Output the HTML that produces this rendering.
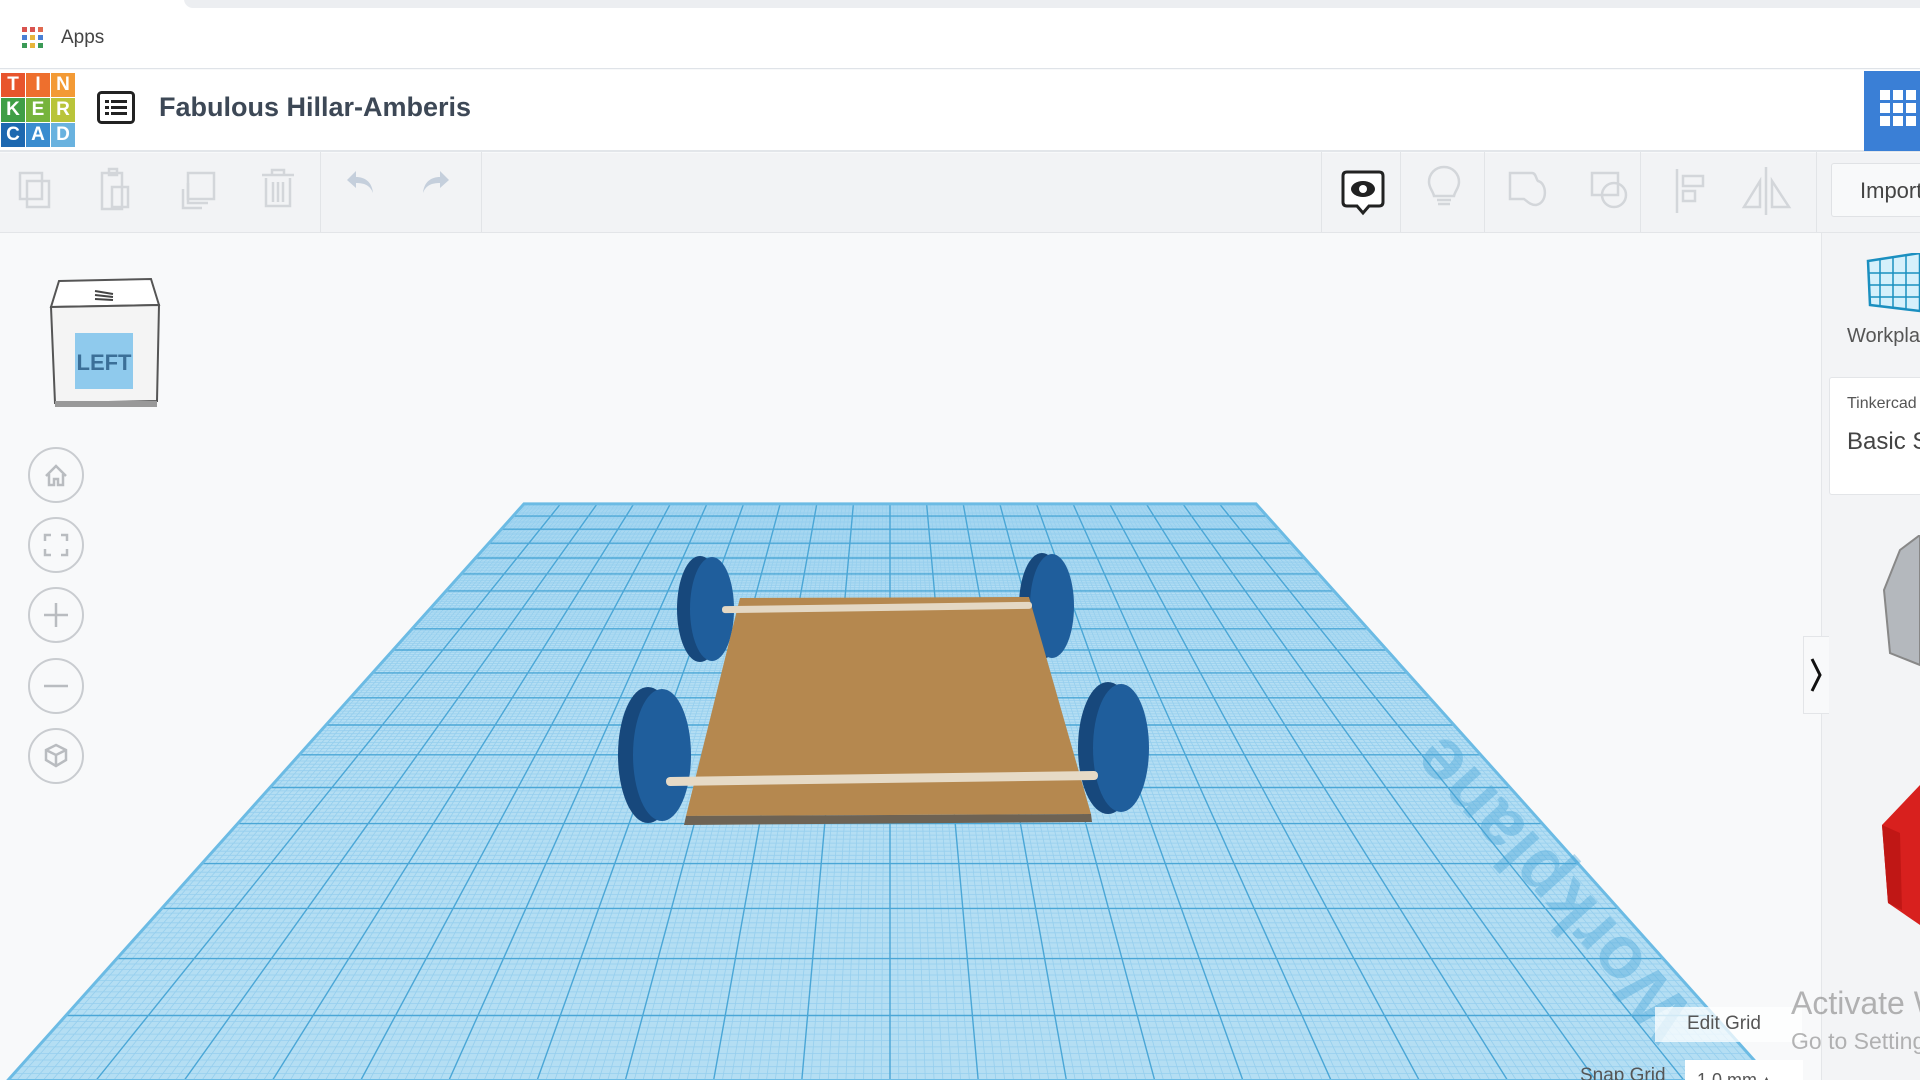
<!DOCTYPE html>
<html><head><meta charset="utf-8">
<style>
*{margin:0;padding:0;box-sizing:border-box}
html{overflow:hidden;width:1920px;height:1080px}
body{width:1920px;height:1080px;overflow:hidden;background:#f8f9fa;font-family:"Liberation Sans",sans-serif;position:relative}
.abs{position:absolute}
.tile{position:absolute;width:24px;height:24px;color:#fff;font-weight:bold;font-size:19px;text-align:center;line-height:24px}
.circ{position:absolute;left:28px;width:56px;height:56px;border:2px solid #c9ccd0;border-radius:50%;background:#f8f9fa}
.sep{position:absolute;top:152px;width:1px;height:80px;background:#e2e4e7}
.clip{position:absolute;overflow:hidden;white-space:nowrap}
</style></head><body>
<div class="abs" style="left:0;top:0;width:1920px;height:69px;background:#fff;border-bottom:1px solid #dfe3e8"></div>
<div class="abs" style="left:184px;top:-10px;width:1736px;height:18px;background:#eceef1;border-radius:9px 0 0 9px"></div>
<svg class="abs" style="left:22px;top:27px" width="22" height="22">
<g><rect x="0" y="0" width="5" height="5" fill="#d9534f"/><rect x="8" y="0" width="5" height="5" fill="#d9534f"/><rect x="16" y="0" width="5" height="5" fill="#e06a50"/>
<rect x="0" y="8" width="5" height="5" fill="#4a7fd4"/><rect x="8" y="8" width="5" height="5" fill="#e7b53b"/><rect x="16" y="8" width="5" height="5" fill="#4a7fd4"/>
<rect x="0" y="16" width="5" height="5" fill="#3b9a57"/><rect x="8" y="16" width="5" height="5" fill="#e7b53b"/><rect x="16" y="16" width="5" height="5" fill="#3b9a57"/></g></svg>
<div class="abs" style="left:61px;top:27px;font-size:19px;color:#444">Apps</div>

<div class="abs" style="left:0;top:70px;width:1920px;height:82px;background:#fff;border-bottom:2px solid #e3e6ea"></div>
<div class="tile" style="left:1px;top:73px;background:#e8542c">T</div>
<div class="tile" style="left:26px;top:73px;background:#ee6f2d">I</div>
<div class="tile" style="left:51px;top:73px;background:#f39a35">N</div>
<div class="tile" style="left:1px;top:98px;background:#3f9e46">K</div>
<div class="tile" style="left:26px;top:98px;background:#76b43c">E</div>
<div class="tile" style="left:51px;top:98px;background:#b9c43a">R</div>
<div class="tile" style="left:1px;top:123px;background:#1d68b0">C</div>
<div class="tile" style="left:26px;top:123px;background:#3a8ccf">A</div>
<div class="tile" style="left:51px;top:123px;background:#69b2df">D</div>
<svg class="abs" style="left:97px;top:91px" width="38" height="34"><rect x="1.5" y="1.5" width="35" height="30" rx="3" fill="none" stroke="#222" stroke-width="3"/>
<rect x="8" y="9" width="4" height="3" fill="#222"/><rect x="14" y="9" width="16" height="3" fill="#222"/><rect x="8" y="15" width="4" height="3" fill="#222"/><rect x="14" y="15" width="16" height="3" fill="#222"/><rect x="8" y="21" width="4" height="3" fill="#222"/><rect x="14" y="21" width="16" height="3" fill="#222"/></svg>
<div class="abs" style="left:159px;top:92px;font-size:27px;font-weight:bold;color:#3d4856">Fabulous Hillar-Amberis</div>
<div class="abs" style="left:1864px;top:71px;width:56px;height:80px;background:#3a7fd6"></div>
<svg class="abs" style="left:1880px;top:90px" width="40" height="40"><g fill="#fff"><rect x="0" y="0" width="10" height="10"/><rect x="13" y="0" width="10" height="10"/><rect x="26" y="0" width="10" height="10"/><rect x="0" y="13" width="10" height="10"/><rect x="13" y="13" width="10" height="10"/><rect x="26" y="13" width="10" height="10"/><rect x="0" y="26" width="10" height="10"/><rect x="13" y="26" width="10" height="10"/><rect x="26" y="26" width="10" height="10"/></g></svg>

<div class="abs" style="left:0;top:153px;width:1920px;height:80px;background:#f2f3f5;border-bottom:1px solid #e3e5e8"></div>
<div class="sep" style="left:320px"></div><div class="sep" style="left:481px"></div>
<div class="sep" style="left:1321px"></div><div class="sep" style="left:1400px"></div><div class="sep" style="left:1484px"></div><div class="sep" style="left:1640px"></div><div class="sep" style="left:1816px"></div>
<svg class="abs" style="left:0;top:153px" width="1920" height="80" fill="none" stroke="#d3d6da" stroke-width="2.5">
<rect x="20" y="20" width="22" height="26"/><rect x="27" y="28" width="22" height="26"/>
<rect x="102" y="20" width="20" height="36"/><rect x="109" y="16" width="8" height="6"/><rect x="112" y="34" width="16" height="20"/>
<rect x="188" y="20" width="26" height="26"/><path d="M188 30 v20 h20 M183 36 v19 h19"/>
<path d="M262 22 h32 M272 22 v-5 h12 v5 M266 25 v28 h24 v-28 M273 29 v20 M278 29 v20 M283 29 v20"/>
<path d="M356 18 l-9 9 l9 8 v-5 c8 0 14 2 17 10 c-1 -11 -8 -16 -17 -16 z" fill="#c5cfdc" stroke="none"/>
<path d="M440 18 l9 9 l-9 8 v-5 c-8 0 -14 2 -17 10 c1 -11 8 -16 17 -16 z" fill="#c5cfdc" stroke="none"/>
<path d="M1444 14 c-9 0 -15 7 -15 15 c0 6 4 9 5 14 h20 c1 -5 5 -8 5 -14 c0 -8 -6 -15 -15 -15 z M1437 47 h14 M1438 51 h12"/>
<path d="M1510 20 h22 c4 0 4 6 6 8 c9 2 10 22 -2 24 c-6 0 -9 -4 -12 -6 h-14 z"/>
<rect x="1592" y="20" width="26" height="22"/><circle cx="1614" cy="42" r="12"/>
<path d="M1677 16 v44"/><rect x="1683" y="23" width="20" height="10"/><rect x="1683" y="38" width="12" height="10"/>
<path d="M1766 14 v48 M1760 54 l-16 0 l16 -26 z M1772 54 h17 l-17 -26 z"/>
</svg>
<svg class="abs" style="left:1341px;top:169px" width="44" height="50"><path d="M6 3 h32 q4 0 4 4 v26 q0 4 -4 4 h-10 l-6 7 l-6 -7 h-10 q-4 0 -4 -4 v-26 q0 -4 4 -4 z" fill="#fff" stroke="#222" stroke-width="3"/><ellipse cx="22" cy="20" rx="12" ry="8" fill="#222"/><circle cx="22" cy="20" r="4" fill="#fff"/></svg>
<div class="clip" style="left:1831px;top:163px;width:89px;height:54px;border:1px solid #e0e2e5;border-right:none;border-radius:3px 0 0 3px;background:#f8f9fa;font-size:22px;color:#444;padding:14px 0 0 28px">Import</div>

<svg id="wp" class="abs" style="left:0;top:0" width="1920" height="1080"></svg>

<svg class="abs" style="left:0;top:0" width="1920" height="1080">
<ellipse cx="700" cy="609" rx="23" ry="53" fill="#17487c"/><ellipse cx="712" cy="609" rx="22" ry="52" fill="#1f5e9c"/>
<ellipse cx="1042" cy="606" rx="23" ry="53" fill="#17487c"/><ellipse cx="1052" cy="606" rx="22" ry="52" fill="#1f5e9c"/>
<polygon points="740,598 1029,597 1091,814 686,816" fill="#b5884f"/>
<polygon points="686,816 1091,814 1092,822 684,825" fill="#6e6354"/>
<rect x="722" y="604" width="310" height="7" rx="3" fill="#e4d8c4" transform="rotate(-0.8 877 607)"/>
<ellipse cx="648" cy="755" rx="30" ry="68" fill="#17487c"/><ellipse cx="662" cy="755" rx="29" ry="66" fill="#1f5e9c"/>
<ellipse cx="1108" cy="748" rx="30" ry="66" fill="#17487c"/><ellipse cx="1121" cy="748" rx="28" ry="64" fill="#1f5e9c"/>
<rect x="666" y="774" width="432" height="9" rx="4" fill="#e6dac6" transform="rotate(-0.8 882 778)"/>
</svg>

<svg class="abs" style="left:45px;top:275px" width="120" height="135">
<polygon points="14,6 106,4 114,30 6,32" fill="#fff" stroke="#555" stroke-width="2"/>
<polygon points="6,32 114,30 112,126 10,128" fill="#f4f4f4" stroke="#555" stroke-width="2"/>
<rect x="10" y="126" width="102" height="6" fill="#999"/>
<rect x="30" y="58" width="58" height="56" fill="#8fcaed"/>
<text x="59" y="95" font-size="22" font-weight="bold" fill="#3b6f98" text-anchor="middle" font-family="Liberation Sans">LEFT</text>
<path d="M50 16 l18 3 M50 20 l18 2 M50 24 l18 1" stroke="#444" stroke-width="2"/>
</svg>
<div class="circ" style="top:447px"></div><div class="circ" style="top:517px"></div><div class="circ" style="top:587px"></div><div class="circ" style="top:658px"></div><div class="circ" style="top:728px"></div>
<svg class="abs" style="left:28px;top:447px" width="56" height="340" fill="none" stroke="#b9bcc0" stroke-width="2.5">
<path d="M18 29 l10 -10 l10 10 M21 27 v11 h5 v-6 h4 v6 h5 v-11"/>
<path d="M17 94 v-6 h6 M33 88 h6 v6 M39 102 v6 h-6 M23 108 h-6 v-6"/>
<path d="M28 156 v24 M16 168 h24"/>
<path d="M16 239 h24"/>
<path d="M28 298 l10 5 v10 l-10 6 l-10 -6 v-10 z M18 303 l10 5 l10 -5 M28 308 v11"/>
</svg>

<div class="abs" style="left:1821px;top:233px;width:99px;height:847px;background:#f3f4f6;border-left:1px solid #e4e6e9"></div>
<svg class="abs" style="left:1866px;top:253px" width="54" height="62"><polygon points="2,8 54,0 54,58 4,52" fill="#d5f0fb" stroke="#1a8fc0" stroke-width="2.5"/><g stroke="#1a8fc0" stroke-width="1.5"><path d="M14 6 v48 M27 4 v50 M40 2 v54 M3 20 h51 M3 32 h51 M3 44 h51"/></g></svg>
<div class="clip" style="left:1847px;top:325px;width:73px;font-size:20px;color:#555">Workplane</div>
<div class="abs" style="left:1829px;top:377px;width:91px;height:118px;background:#fff;border:1px solid #e3e5e8;border-right:none;border-radius:3px 0 0 3px"></div>
<div class="clip" style="left:1847px;top:395px;width:73px;font-size:16px;color:#555">Tinkercad</div>
<div class="clip" style="left:1847px;top:428px;width:73px;font-size:24px;color:#444">Basic Shapes</div>
<svg class="abs" style="left:1880px;top:535px" width="40" height="135"><polygon points="20,15 40,0 40,130 10,118 4,55" fill="#b4b8bd" stroke="#888" stroke-width="2"/></svg>
<svg class="abs" style="left:1880px;top:785px" width="40" height="145"><polygon points="2,40 40,0 40,140 8,118" fill="#d8201e"/><polygon points="2,40 20,48 22,125 8,118" fill="#c01715"/></svg>
<div class="abs" style="left:1803px;top:636px;width:26px;height:78px;background:#f8f9fa;border:1px solid #e3e5e8;border-right:none"></div>
<svg class="abs" style="left:1808px;top:655px" width="16" height="40"><path d="M4 4 l8 16 l-8 16" fill="none" stroke="#111" stroke-width="3"/></svg>

<div class="abs" style="left:1655px;top:1007px;width:147px;height:35px;background:rgba(255,255,255,0.75);font-size:19px;color:#555;padding:6px 0 0 32px">Edit Grid</div>
<div class="abs" style="left:1580px;top:1065px;font-size:19px;color:#555">Snap Grid</div>
<div class="abs" style="left:1685px;top:1060px;width:118px;height:20px;background:#fff;font-size:18px;color:#555;padding:10px 0 0 12px;overflow:hidden">1.0 mm ▴</div>
<div class="clip" style="left:1791px;top:985px;width:129px;font-size:32px;color:rgba(120,120,120,0.55)">Activate Windows</div>
<div class="clip" style="left:1791px;top:1028px;width:129px;font-size:23px;color:rgba(120,120,120,0.55)">Go to Settings</div>

<script>
(function(){
var s=document.getElementById('wp'),ns='http://www.w3.org/2000/svg';
var vx=890,vy=95,f=1251,H=111.7,Z0=141.8,W=200,D=200;
function P(X,Z){return [vx+f*(X-W/2)/Z, vy+f*H/Z];}
function add(t,a){var e=document.createElementNS(ns,t);for(var k in a)e.setAttribute(k,a[k]);s.appendChild(e);return e;}
var c=[P(0,Z0+D),P(W,Z0+D),P(W,Z0),P(0,Z0)];
add('polygon',{points:c.map(function(p){return p.join(',')}).join(' '),fill:'#b4def3'});
var d1='',d2='';
for(var i=0;i<=W;i++){var a=P(i,Z0+D),b=P(i,Z0);var l='M'+a[0].toFixed(1)+' '+a[1].toFixed(1)+'L'+b[0].toFixed(1)+' '+b[1].toFixed(1);if(i%10==0)d2+=l;else d1+=l;}
for(var j=0;j<=D;j++){var a=P(0,Z0+j),b=P(W,Z0+j);var l='M'+a[0].toFixed(1)+' '+a[1].toFixed(1)+'L'+b[0].toFixed(1)+' '+b[1].toFixed(1);if(j%10==0)d2+=l;else d1+=l;}
add('path',{d:d1,stroke:'#8fcbec',"stroke-width":'0.8',fill:'none',opacity:'0.8'});
add('path',{d:d2,stroke:'#4aa6d6',"stroke-width":'1.4',fill:'none'});
add('polygon',{points:c.map(function(p){return p.join(',')}).join(' '),fill:'none',stroke:'#6cbbe4','stroke-width':'3'});
var t=add('text',{x:0,y:0,'font-size':'74','font-weight':'bold',fill:'#4aa6d8',opacity:'0.4','font-family':'Liberation Sans','text-anchor':'middle',transform:'translate(1570,872) rotate(-132)'});
t.textContent='Workplane';
})();
</script>
</body></html>
